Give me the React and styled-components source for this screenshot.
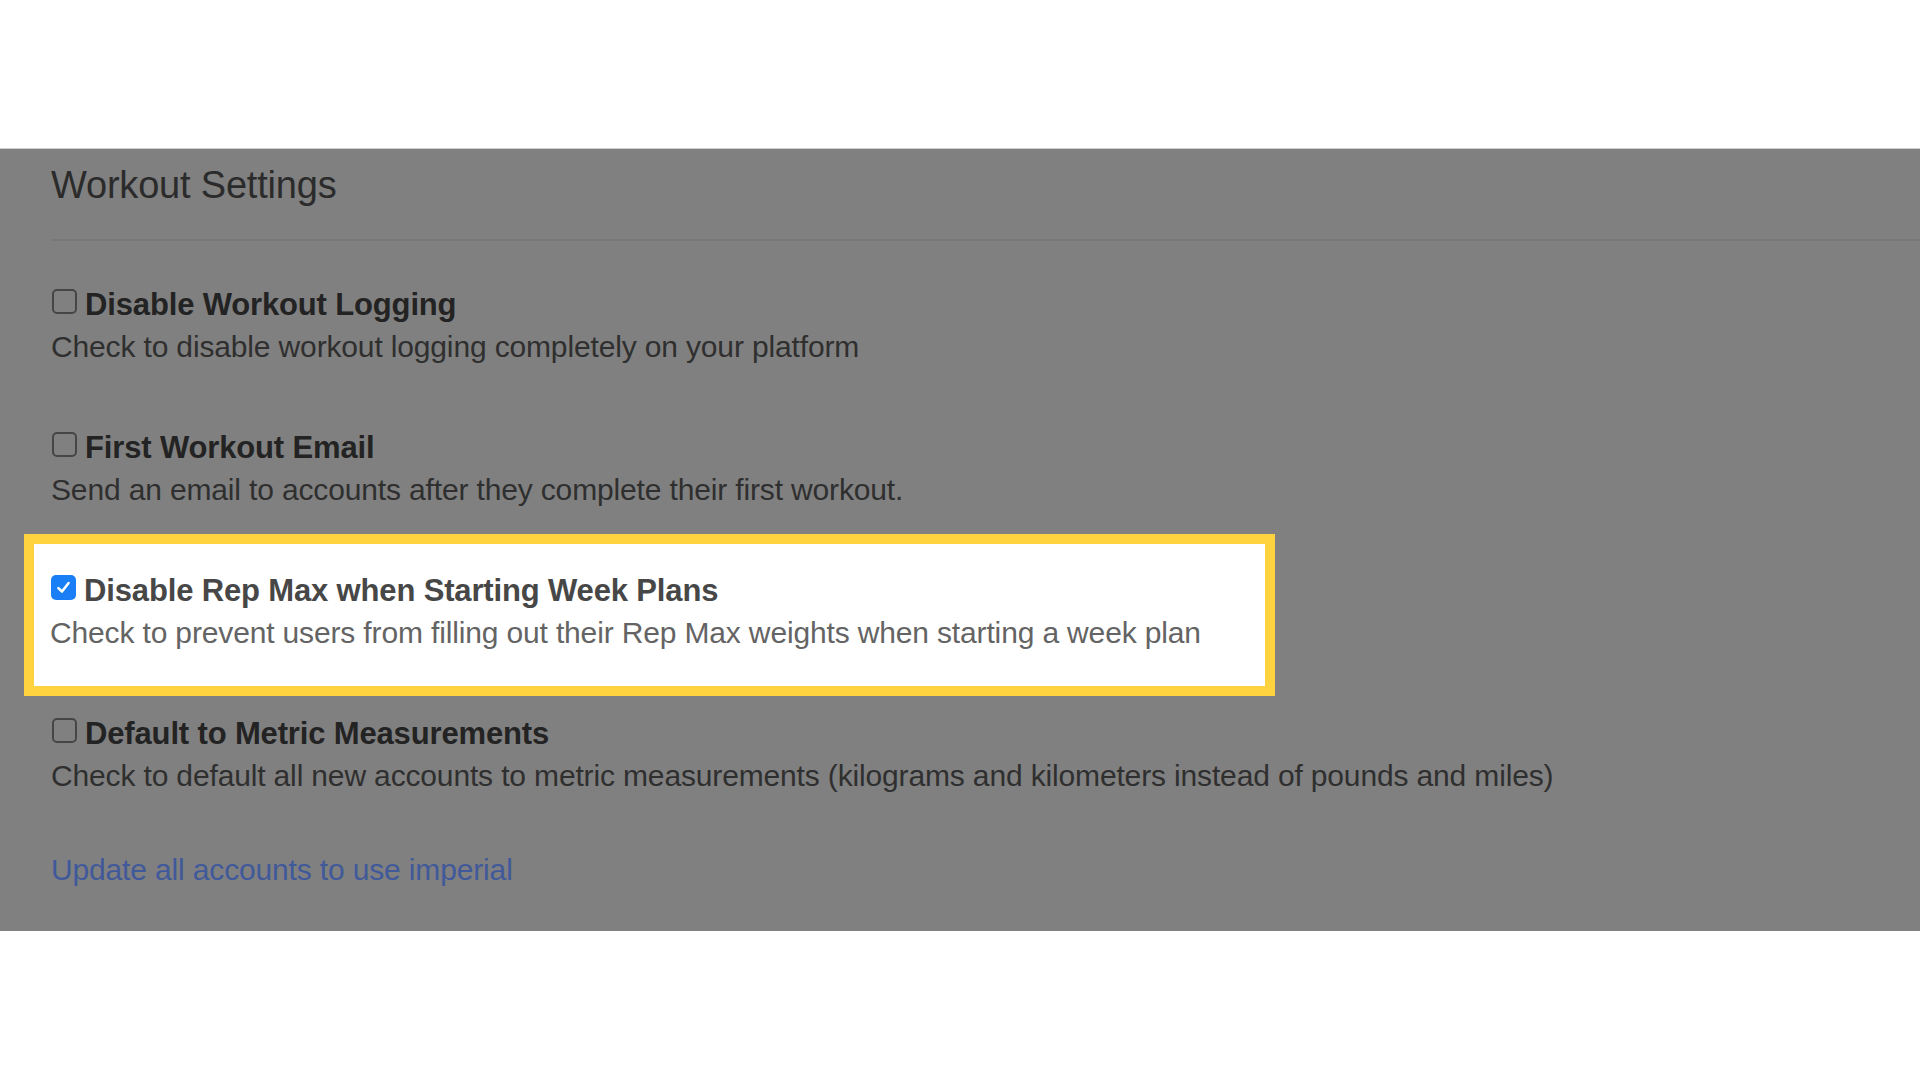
import React from "react";
import styled, { createGlobalStyle } from "styled-components";

const Global = createGlobalStyle`
  html, body { margin: 0; padding: 0; background: #ffffff; }
  body { font-family: "Liberation Sans", Arial, Helvetica, sans-serif; }
`;

const Page = styled.div`
  width: 1920px;
  height: 1080px;
  padding-top: 148px;
  box-sizing: border-box;
  background: #ffffff;
  overflow: hidden;
`;

const Panel = styled.section`
  background: #808080;
  border-top: 1px solid #cdcdcd;
  height: 783px;
  box-sizing: border-box;
  padding: 14px 0 0 51px;
`;

const Title = styled.h2`
  margin: 0;
  font-size: 38px;
  line-height: 44px;
  font-weight: 400;
  color: #2b2b2b;
  letter-spacing: -0.2px;
`;

const Divider = styled.hr`
  margin: 32px 0 43px 0;
  border: 0;
  height: 2px;
  background: #787878;
`;

const Settings = styled.div`
  display: flex;
  flex-direction: column;
  gap: 59px;
`;

const Setting = styled.div`
  display: flex;
  flex-direction: column;
  width: ${(p) => (p.$highlight ? "1199px" : "auto")};
  ${(p) =>
    p.$highlight &&
    `
    margin: -36px 0 -42px -27px;
    padding: 26px 16px 32px 16px;
    border: 10px solid #ffd23f;
    background: #ffffff;
  `}
`;

const LabelRow = styled.label`
  display: flex;
  align-items: flex-start;
  gap: 8px;
  font-size: 31px;
  line-height: 42px;
  font-weight: 700;
  color: ${(p) => (p.$lit ? "#474747" : "#232323")};
  letter-spacing: -0.15px;
`;

const Box = styled.span`
  flex: none;
  width: 25px;
  height: 25px;
  margin-top: 5px;
  margin-left: 1px;
  box-sizing: border-box;
  border-radius: 5px;
  display: flex;
  align-items: center;
  justify-content: center;
  border: ${(p) => (p.$checked ? "none" : "2px solid #464646")};
  background: ${(p) => (p.$checked ? "#1a7ef6" : "transparent")};
`;

const Desc = styled.p`
  margin: 0;
  font-size: 30px;
  line-height: 42px;
  font-weight: 400;
  color: ${(p) => (p.$lit ? "#646464" : "#2f2f2f")};
  letter-spacing: -0.15px;
`;

const Link = styled.a`
  display: inline-block;
  margin-top: 52px;
  font-size: 30px;
  line-height: 42px;
  color: #40599a;
  text-decoration: none;
  letter-spacing: -0.15px;
`;

const Checkbox = ({ checked }) => (
  <Box $checked={checked}>
    {checked && (
      <svg width="17" height="17" viewBox="0 0 16 16" fill="none">
        <path
          d="M3.2 8.6 L6.6 11.8 L12.8 3.8"
          stroke="#ffffff"
          strokeWidth="2.4"
          strokeLinecap="round"
          strokeLinejoin="round"
        />
      </svg>
    )}
  </Box>
);

const settings = [
  {
    label: "Disable Workout Logging",
    desc: "Check to disable workout logging completely on your platform",
    checked: false,
  },
  {
    label: "First Workout Email",
    desc: "Send an email to accounts after they complete their first workout.",
    checked: false,
  },
  {
    label: "Disable Rep Max when Starting Week Plans",
    desc: "Check to prevent users from filling out their Rep Max weights when starting a week plan",
    checked: true,
    highlight: true,
  },
  {
    label: "Default to Metric Measurements",
    desc: "Check to default all new accounts to metric measurements (kilograms and kilometers instead of pounds and miles)",
    checked: false,
  },
];

export default function App() {
  return (
    <>
      <Global />
      <Page>
        <Panel>
          <Title>Workout Settings</Title>
          <Divider />
          <Settings>
            {settings.map((s) => (
              <Setting key={s.label} $highlight={s.highlight}>
                <LabelRow $lit={s.highlight}>
                  <Checkbox checked={s.checked} />
                  <span>{s.label}</span>
                </LabelRow>
                <Desc $lit={s.highlight}>{s.desc}</Desc>
              </Setting>
            ))}
          </Settings>
          <Link href="#">Update all accounts to use imperial</Link>
        </Panel>
      </Page>
    </>
  );
}
